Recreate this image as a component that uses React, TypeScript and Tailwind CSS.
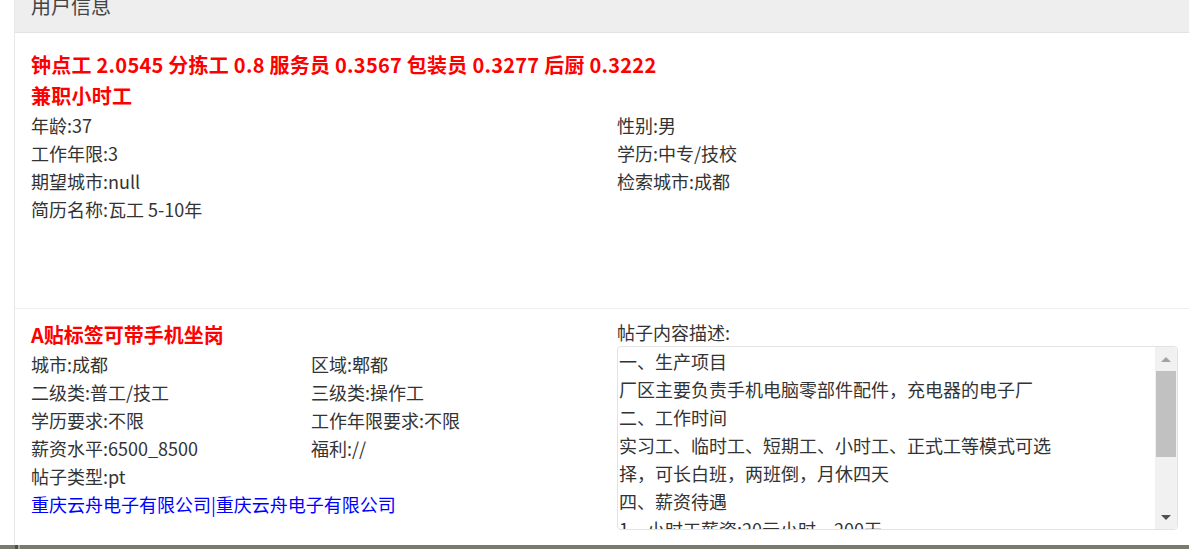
import React from 'react';

const font = '"Noto Sans CJK SC", "Noto Sans", sans-serif';

const userLeft = ['年龄:37', '工作年限:3', '期望城市:null', '简历名称:瓦工 5-10年'];
const userRight = ['性别:男', '学历:中专/技校', '检索城市:成都'];

const jobFields: [string, string][] = [
  ['城市:成都', '区域:郫都'],
  ['二级类:普工/技工', '三级类:操作工'],
  ['学历要求:不限', '工作年限要求:不限'],
  ['薪资水平:6500_8500', '福利://'],
  ['帖子类型:pt', ''],
];

const descLines = [
  '一、生产项目',
  '厂区主要负责手机电脑零部件配件，充电器的电子厂',
  '二、工作时间',
  '实习工、临时工、短期工、小时工、正式工等模式可选',
  '择，可长白班，两班倒，月休四天',
  '四、薪资待遇',
  '1、小时工薪资:20元小时，200天',
];

function FakeScrollbar() {
  return (
    <div className="flex w-[22px] shrink-0 flex-col bg-[#f1f1f1]">
      <div className="flex h-[24px] items-center justify-center">
        <div className="h-0 w-0 border-x-[5px] border-b-[5px] border-x-transparent border-b-[#a3a3a3]" />
      </div>
      <div className="mx-[1px] h-[86px] bg-[#c1c1c1]" />
      <div className="flex-1" />
      <div className="flex h-[24px] items-center justify-center">
        <div className="h-0 w-0 border-x-[5px] border-t-[5px] border-x-transparent border-t-[#505050]" />
      </div>
    </div>
  );
}

export default function App() {
  return (
    <div className="flex h-[549px] w-[1189px] flex-col overflow-hidden bg-white" style={{ fontFamily: font }}>
      <div className="flex min-h-0 flex-1">
        <div className="w-[14px] shrink-0 bg-white" />
        <div className="flex min-w-0 flex-1 flex-col border-l border-[#e8e8e8]">
          {/* panel heading, scrolled partly out of view */}
          <div className="h-[33px] shrink-0 overflow-hidden border-b border-[#e3e3e3] bg-[#eeeeee] pl-[16px]">
            <div className="mt-[-5px] text-[20px] leading-[22px] text-[#444]">用户信息</div>
          </div>

          {/* user section */}
          <div className="h-[276px] shrink-0 border-b border-[#eeeeee] pt-[16px]">
            <div className="pl-[16px] text-[20px] font-bold leading-[31px] tracking-[0.25px] text-[#ff0000]">
              <div>钟点工 2.0545 分拣工 0.8 服务员 0.3567 包装员 0.3277 后厨 0.3222</div>
              <div>兼职小时工</div>
            </div>
            <div className="flex text-[18px] leading-[28px] text-[#333]">
              <div className="w-[586px] shrink-0 pl-[16px]">
                {userLeft.map((t) => (
                  <div key={t}>{t}</div>
                ))}
              </div>
              <div className="flex-1 pl-[16px]">
                {userRight.map((t) => (
                  <div key={t}>{t}</div>
                ))}
              </div>
            </div>
          </div>

          {/* job section */}
          <div className="flex min-h-0 flex-1 pt-[11px] text-[18px] text-[#333]">
            <div className="w-[586px] shrink-0 pl-[16px]">
              <div className="text-[20px] font-bold leading-[30px] text-[#ff0000]">A贴标签可带手机坐岗</div>
              <div className="grid grid-cols-[280px_1fr] leading-[28px]">
                {jobFields.map(([a, b]) => (
                  <React.Fragment key={a}>
                    <div>{a}</div>
                    <div>{b}</div>
                  </React.Fragment>
                ))}
              </div>
              <div className="leading-[28px] text-[#0000ff]">重庆云舟电子有限公司|重庆云舟电子有限公司</div>
            </div>
            <div className="flex-1 pl-[16px] pr-[11px]">
              <div className="leading-[24px]">帖子内容描述:</div>
              <div className="mt-[2px] flex h-[184px] overflow-hidden rounded-[4px] border border-[#e3e3e3]">
                <div className="min-w-0 flex-1 overflow-hidden pl-[1px] leading-[28px]">
                  {descLines.map((l) => (
                    <div key={l} className="whitespace-nowrap">
                      {l}
                    </div>
                  ))}
                </div>
                <FakeScrollbar />
              </div>
            </div>
          </div>
        </div>
      </div>
      <div className="flex h-[4px] shrink-0 bg-[#7a7a6e]">
        <div className="w-[15px]" />
        <div className="w-[3px] bg-[#4f4f47]" />
        <div className="w-[2px] bg-[#a5a59b]" />
      </div>
    </div>
  );
}
